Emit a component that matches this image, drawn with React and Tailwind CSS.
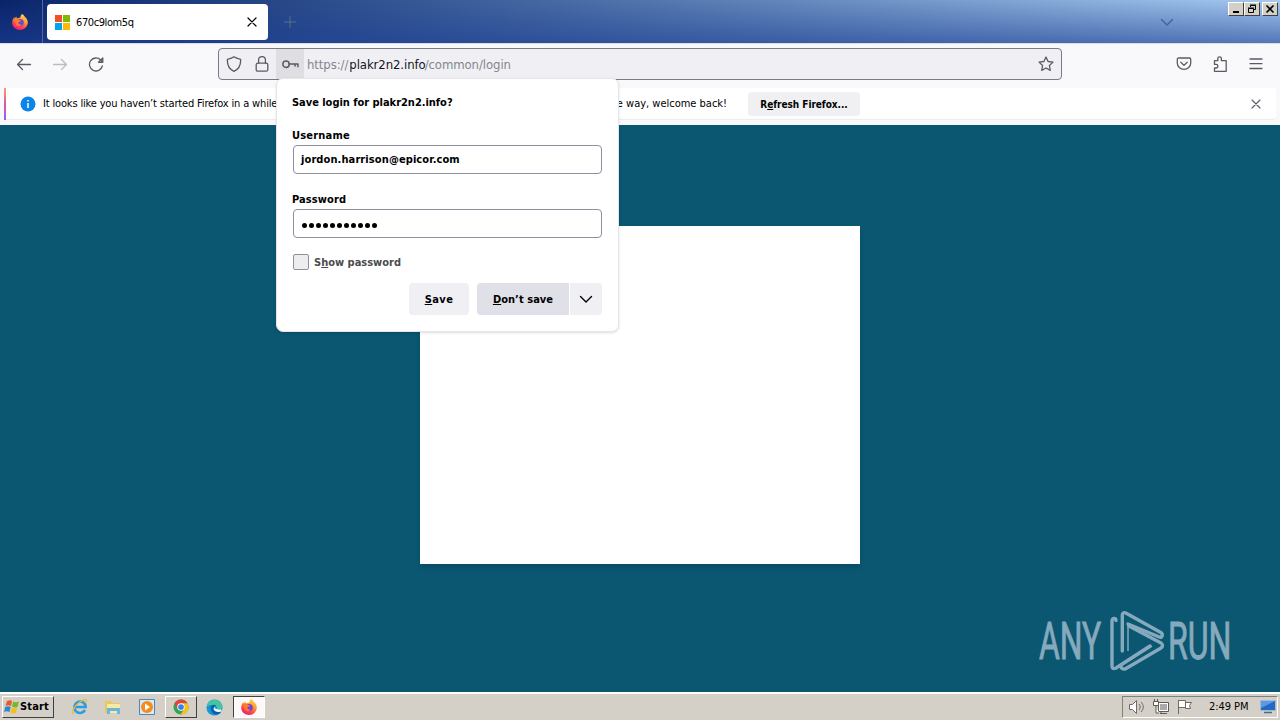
import React from 'react'

const stroke = { fill: 'none', stroke: 'currentColor', strokeWidth: 1.3, strokeLinecap: 'round', strokeLinejoin: 'round' }

function Glyph({ d, className = 'size-4', children, width = 1.3 }) {
  return (
    <svg viewBox="0 0 16 16" className={`${className} shrink-0`} {...stroke} strokeWidth={width}>
      {d && <path d={d} />}
      {children}
    </svg>
  )
}

function Firefox({ className = 'size-4' }) {
  return (
    <svg viewBox="0 0 16 16" className={`${className} shrink-0`}>
      <defs>
        <linearGradient id="fox" x1="0.8" y1="0" x2="0.3" y2="1">
          <stop offset="0" stopColor="#ffe14d" />
          <stop offset="0.4" stopColor="#ff9a2e" />
          <stop offset="0.75" stopColor="#ff3f4c" />
          <stop offset="1" stopColor="#e8188a" />
        </linearGradient>
      </defs>
      <path d="M10 0c2 1 2.500 2.600 3.200 3.200.7.3 1 .8 1.400 1.500C15.500 6.300 16 7.500 15.800 9c-.5 4-3.800 7-7.800 7S.3 13 .2 8.800C.1 6.500 1 4.600 2.400 3l.2 1.700L4.200 2.500l.8 2c1-.6 2-.8 3-.6C8.600 2.500 9 1 10 0z" fill="url(#fox)" />
      <circle cx="8.200" cy="8.600" r="3.600" fill="#7542d8" />
      <path d="M2.500 5.500c1.500-.8 3.500-.6 5 .6 1 .2 1.500.5 1.500 1-1 .7-2 .6-2.500 1.300-.3 1.600 1.500 2.600 3.200 1.800-1.200 2.800-5.200 2.500-6.300-.4C2.800 8 3 6.700 2.500 5.500z" fill="#ff7a2a" />
    </svg>
  )
}

function WinButton({ children }) {
  return (
    <span className="flex h-[14px] w-4 items-center justify-center border border-t-white border-l-white border-r-[#404040] border-b-[#404040] bg-[#d4d0c8] text-black">
      {children}
    </span>
  )
}

function TitleBar() {
  return (
    <header className="flex h-[43px] bg-linear-to-r from-[#0a246a] to-[#a6caf0] relative">
      <div className="absolute inset-0 bg-linear-to-b from-transparent to-[#1d3f94]/60" />
      <div className="relative flex w-full items-start">
        <div className="flex h-[43px] w-[43px] items-center justify-center border-r border-[#4f66a8] pr-[3px]">
          <Firefox />
        </div>
        <div className="mt-1 ml-1 flex h-9 w-[221px] items-center rounded-[4px] bg-white pl-2">
          <div className="grid grid-cols-2 gap-px">
            <span className="size-[7px] bg-[#f25022]" />
            <span className="size-[7px] bg-[#7fba00]" />
            <span className="size-[7px] bg-[#00a4ef]" />
            <span className="size-[7px] bg-[#ffb900]" />
          </div>
          <span className="ml-[6px] w-[167px] pt-[2px] text-[11px] tracking-[-0.4px]">670c9lom5q</span>
          <Glyph d="M4 4l8 8M12 4l-8 8" className="ml-px size-4" width={1.200} />
        </div>
        <Glyph d="M8 2.500v11M2.500 8h11" className="mt-[14px] ml-[14px] size-4 text-[#56708f]" width={1} />
        <Glyph d="M2.500 5.500L8 11l5.500-5.500" className="mt-[14px] ml-auto size-4 text-[#48659a]" width={1.500} />
        <div className="mt-[2px] mr-[2px] ml-[53px] flex">
          <WinButton><svg viewBox="0 0 12 10" className="h-[10px] w-3"><path d="M3 8h6" stroke="#000" strokeWidth="2" /></svg></WinButton>
          <WinButton>
            <svg viewBox="0 0 12 10" className="h-[10px] w-3" fill="none" stroke="#000"><path d="M4.500 3V1.500h5v4H8M4 1h6M2.500 4.500h5v4h-5zM2 4h6" /></svg>
          </WinButton>
          <span className="w-[2px]" />
          <WinButton><svg viewBox="0 0 12 10" className="h-[10px] w-3"><path d="M2.500 1.500l7 7M9.500 1.500l-7 7" stroke="#000" strokeWidth="1.600" /></svg></WinButton>
        </div>
      </div>
    </header>
  )
}

function NavBar() {
  return (
    <nav className="flex h-[45px] items-start border-t border-[#dcdce4] bg-[#f9f9fb] pt-1 text-[#5b5b66]">
      <div className="mt-2 ml-4 flex gap-5">
        <Glyph d="M14.500 8.500H1.500M6.500 3.500L1.500 8.500L6.500 13.500" />
        <Glyph d="M1.500 8.500h13M9.500 3.500L14.500 8.500L9.500 13.500" className="size-4 text-[#bcbcc4]" />
        <Glyph d="M14.300 10a6.500 6.500 0 1 1-1.600-6L14 5.500M14.800 2v4.300h-4.300z" />
      </div>
      <div className="ml-[114px] flex h-8 w-[844px] items-center rounded-[4px] border border-[#7a7a85] bg-[#f0f0f4]">
        <Glyph d="M8 .8C10 2.400 12 2.800 14.600 3.300C15 9 13 13 8 15.300C3 13 1 9 1.400 3.300C4 2.800 6 2.400 8 .8z" className="ml-[7px] size-4" />
        <Glyph className="ml-3 size-4">
          <rect x="2.200" y="7.200" width="11.600" height="8" rx="1.500" />
          <path d="M4.600 7V4a3.400 3.400 0 0 1 6.800 0v3" />
        </Glyph>
        <span className="ml-[6px] flex h-[30px] w-7 items-center justify-center bg-[#dedee3]">
          <Glyph className="size-[17px]" width={1.400}>
            <circle cx="3.800" cy="7.800" r="3" />
            <path d="M6.800 7.500H15v2.700M12.300 7.500v2" />
          </Glyph>
        </span>
        <span className="ml-[3px] pt-px text-[13px] tracking-[-0.08px] whitespace-pre text-[#85858e]">
          https://<span className="ml-px text-[#15141a]">plakr2n2.info</span><span className="-ml-px">/common/login</span>
        </span>
        <Glyph d="M8 1l2.100 4.500 4.900.6-3.600 3.400.9 4.900L8 12l-4.300 2.400.9-4.900L1 6.100l4.900-.6z" className="mr-[7px] ml-auto size-4" />
      </div>
      <div className="mt-2 ml-auto flex gap-5 pr-4">
        <Glyph>
          <path d="M2.500 2h11c.7 0 1.200.5 1.200 1.200v4a6.700 6.200 0 0 1-13.400 0v-4C1.300 2.500 1.800 2 2.500 2z" />
          <path d="M4.800 6.300L8 9.400l3.200-3.100" />
        </Glyph>
        <Glyph d="M2.500 4.700h3.300V2.600a1.800 1.800 0 0 1 3.600 0v2.100h4.800v10.600H2.500v-3.300h1.600a1.800 1.800 0 0 0 0-3.600H2.500z" />
        <Glyph d="M2 3h12M2 7.700h12M2 12.500h12" />
      </div>
    </nav>
  )
}

function InfoBar() {
  return (
    <div className="h-[37px] bg-[#f9f9fb] pr-1 pl-1">
      <div className="flex h-8 items-center rounded-r-[4px] border-b border-[#ececf0] bg-white">
        <span className="h-8 w-[2px] bg-linear-to-b from-[#ff9a6c] via-[#e0529c] to-[#9059ff]" />
        <svg viewBox="0 0 16 16" className="ml-[14px] size-4 shrink-0">
          <circle cx="8" cy="8" r="7.500" fill="#0a84e8" />
          <path d="M8 7v5M8 4v1.500" stroke="#fff" strokeWidth="1.500" />
        </svg>
        <div className="ml-[7px] flex w-[684px] justify-between pt-px text-[11px] whitespace-nowrap">
          <span className="tracking-[-0.16px]">It looks like you haven’t started Firefox in a while</span>
          <span className="tracking-[-0.01px]">By the way, welcome back!</span>
        </div>
        <button className="ml-[21px] h-6 w-[112px] rounded-[4px] bg-[#f0f0f2] pt-px text-[10px] font-bold tracking-[-0.05px] whitespace-nowrap">
          R<u>e</u>fresh Firefox...
        </button>
        <Glyph d="M4 4l8 8M12 4l-8 8" className="mr-3 ml-auto size-4 text-[#5b5b66]" width={1.100} />
      </div>
    </div>
  )
}

function SavePanel() {
  return (
    <section className="absolute top-[78px] left-[276px] flex h-[254px] w-[343px] flex-col rounded-[7px] border border-[#e6e6ea] bg-white pr-4 pl-[15px] text-[11px] font-bold shadow-sm">
      <h1 className="mt-4 h-4 leading-4 tracking-[-0.03px]">Save login for plakr2n2.info?</h1>
      <label className="mt-[17px] h-4 leading-4 tracking-[0.2px]">Username</label>
      <div className="mt-px ml-px flex h-[29px] w-[309px] items-center rounded-[4px] border border-[#8f8f9d] px-[7px] pt-[2px] tracking-[0.1px]">jordon.harrison@epicor.com</div>
      <label className="mt-[18px] h-4 leading-4 tracking-[0.1px]">Password</label>
      <div className="mt-px ml-px flex h-[29px] w-[309px] items-center gap-[2px] rounded-[4px] border border-[#8f8f9d] px-2 pt-1">
        {Array.from({ length: 11 }, (_, i) => <span key={i} className="size-[5px] rounded-full bg-black" />)}
      </div>
      <div className="mt-4 ml-px flex h-4 items-center text-[#4c4c50]">
        <span className="size-4 rounded-[2px] border border-[#8f8f9d] bg-[#ededf0]" />
        <span className="ml-[5px] pt-[2px]">S<u>h</u>ow password</span>
      </div>
      <div className="mt-[13px] flex h-8 w-[310px] justify-end">
        <button className="mr-2 w-[60px] rounded-[4px] bg-[#f0f0f4] pt-[2px] text-[11px] tracking-[0.4px]"><u>S</u>ave</button>
        <button className="mr-px w-[92px] rounded-l-[4px] bg-[#e0e0e8] pt-[2px] tracking-[0.05px]"><u>D</u>on’t save</button>
        <button className="flex w-8 items-center justify-center rounded-r-[4px] bg-[#f0f0f4]">
          <Glyph d="M2.500 5.500L8 11l5.500-5.500" width={1.400} />
        </button>
      </div>
    </section>
  )
}

function Watermark() {
  return (
    <div className="absolute top-[608px] left-[1038px] text-[#86aabd]">
      <svg viewBox="0 0 242 76" className="h-[76px] w-[242px]" fill="none" stroke="currentColor">
        <g fill="currentColor" strokeWidth="0.900" fontFamily="Roboto" fontSize="51">
          <text transform="translate(1 51) scale(.625 1)">ANY</text>
          <text transform="translate(130 51) scale(.63 1)">RUN</text>
        </g>
        <g strokeWidth="3.400" strokeLinecap="round" strokeLinejoin="round">
          <path d="M78 12.500c0-3-4-3-4 1V58c0 3 2 3 4 2l34-22" />
          <path d="M84.300 43V7c0-2 1.500-3 3.500-2l35 19.500c2.500 1.500 1.500 6-1.500 4.500L90 16" />
          <path d="M91 18l32 17c2 1.500 2 3.500 0 5L88 60.500c-2.500 1.500-5 0-5-2" />
        </g>
        <path d="M90 17v26" strokeWidth="1.500" />
        <path d="M84 57l30-19" strokeWidth="1.500" />
      </svg>
    </div>
  )
}

function Taskbar() {
  return (
    <footer className="flex h-7 items-center border-t-2 border-white bg-[#d4d0c8] text-[11px]">
      <button className="ml-[2px] flex h-[22px] w-[52px] items-center border border-t-white border-l-white border-r-[#404040] border-b-[#404040] pl-px font-bold">
        <svg viewBox="0 0 16 16" className="size-4">
          <path d="M3 2c2-1 4-1 5 0L7 7C5 6 3.500 6 1.500 7z" fill="#ec5a24" />
          <path d="M9 2.500c2 1 4 1 6 0L13.500 8c-2 .8-4 .8-5.500-.5z" fill="#77b829" />
          <path d="M1.200 8c2-1 4-1 5.500 0l-1.300 5c-2-1-3.500-1-5.400 0z" fill="#2c86d1" />
          <path d="M7.700 8.600c2 1 3.500 1 5.500.2l-1.400 5c-2 1-4 .8-5.400-.2z" fill="#f7bd1c" />
        </svg>
        <span className="pt-px tracking-[0.15px]">Start</span>
      </button>
      <svg viewBox="0 0 18 18" className="ml-[17px] size-[18px]" fill="none">
        <path d="M14 12a5.700 5.700 0 1 1 .7-3H4" stroke="#2e9ddf" strokeWidth="2.600" />
        <path d="M3 15C-1 16 3 8 9 4c5-3.500 8-3 5.500 1" stroke="#e9b83a" strokeWidth="1.300" />
      </svg>
      <svg viewBox="0 0 18 18" className="ml-[15px] size-[18px]">
        <path d="M1 3h6l1 2h8v10H1z" fill="#e8c85d" />
        <path d="M3 6h13v9H3z" fill="#f8e8a0" />
        <path d="M3 10h13v6h-3v-3H6v3H3z" fill="#69b7de" />
      </svg>
      <svg viewBox="0 0 18 18" className="ml-4 size-[18px]">
        <path d="M1.500 1.500h15v15h-15z" fill="#d8e9f7" stroke="#4c87ba" />
        <circle cx="9" cy="9" r="6" fill="#f58b1f" />
        <path d="M7 5.500L12 9l-5 3.500z" fill="#fff" />
      </svg>
      <span className="ml-[9px] flex h-[22px] w-8 items-center justify-center border border-t-white border-l-white border-r-[#404040] border-b-[#404040]">
        <svg viewBox="0 0 18 18" className="size-4">
          <circle cx="9" cy="9" r="8.500" fill="#32a350" />
          <path d="M1.600 4.800A8.500 8.500 0 0 1 16.400 4.800H9L5.400 11z" fill="#e54335" />
          <path d="M16.400 4.800A8.500 8.500 0 0 1 8.500 17.500L12.600 11l.4-3.500-4-2.700z" fill="#fbc116" />
          <circle cx="9" cy="9" r="4.200" fill="#fff" />
          <circle cx="9" cy="9" r="3.200" fill="#377fe9" />
        </svg>
      </span>
      <svg viewBox="0 0 18 18" className="ml-[9px] size-[17px]">
        <circle cx="9" cy="9" r="8.500" fill="#1597d4" />
        <path d="M.7 8C2 0 14-2 17.300 7c.6 4-3 5-6 4 2-3-3-7-10.600-3z" fill="#43c6a0" />
        <path d="M5 9c0-3 4-4 6-2-3 0-3 5 5 6-3 6-11 4-11-4z" fill="#0b5eae" />
        <path d="M10 7c-2 2 0 5 6 4l1 2c-4 2-9 0-9-3z" fill="#eef8fa" />
      </svg>
      <span className="ml-[10px] flex h-[22px] w-8 items-center justify-center border border-t-[#404040] border-l-[#404040] border-r-white border-b-white bg-[#fbfaf8]">
        <Firefox />
      </span>
      <div className="mr-[2px] ml-auto flex h-[22px] w-[156px] items-center border border-t-[#808080] border-l-[#808080] border-r-white border-b-white">
        <svg viewBox="0 0 18 18" className="ml-[5px] size-[18px]" fill="#fff" stroke="#6d6b67">
          <path d="M1.500 6.500h3l4-4v13l-4-4h-3z" />
          <path d="M11 6c1.500 2 1.500 4 0 6M13 4c3 3 3 7 0 10" fill="none" />
        </svg>
        <svg viewBox="0 0 18 18" className="ml-[6px] size-[18px]" fill="#fff" stroke="#5e5c59">
          <path d="M6.500 4.500h10v9h-10zM8 15.500h7M9 14v2" />
          <path d="M8 6h7v6H8z" fill="#aaa" stroke="none" />
          <path d="M1.500 3.500h5v4h-5zM2.500 1v2M5.500 1v2M4 8v7h3" />
        </svg>
        <svg viewBox="0 0 18 18" className="ml-[6px] size-[18px]" fill="#fff" stroke="#6d6b67">
          <path d="M2.500 2v14M2.500 2.500h7v7h-7M9.500 4.500h6l-2 3 1 3h-5z" />
        </svg>
        <span className="ml-[15px] w-11 pt-px tracking-[-0.05px] whitespace-nowrap">2:49 PM</span>
        <svg viewBox="0 0 16 14" className="ml-[7px] h-[14px] w-4">
          <path d="M.5.500h15v10H.5z" fill="#2668c6" stroke="#a3b9d4" />
          <path d="M1 1h14L1 8z" fill="#5c9be2" />
          <path d="M4 12.500h8" stroke="#476891" strokeWidth="1.500" />
        </svg>
      </div>
    </footer>
  )
}

export default function App() {
  return (
    <div className="relative flex h-[720px] w-[1280px] flex-col overflow-hidden bg-[#0b5670] font-['DejaVu_Sans_Condensed','DejaVu_Sans',sans-serif] text-black">
      <TitleBar />
      <NavBar />
      <InfoBar />
      <main className="flex flex-1 justify-center pt-[101px]">
        <div className="h-[338px] w-[440px] bg-white shadow-md" />
      </main>
      <Taskbar />
      <SavePanel />
      <Watermark />
    </div>
  )
}
